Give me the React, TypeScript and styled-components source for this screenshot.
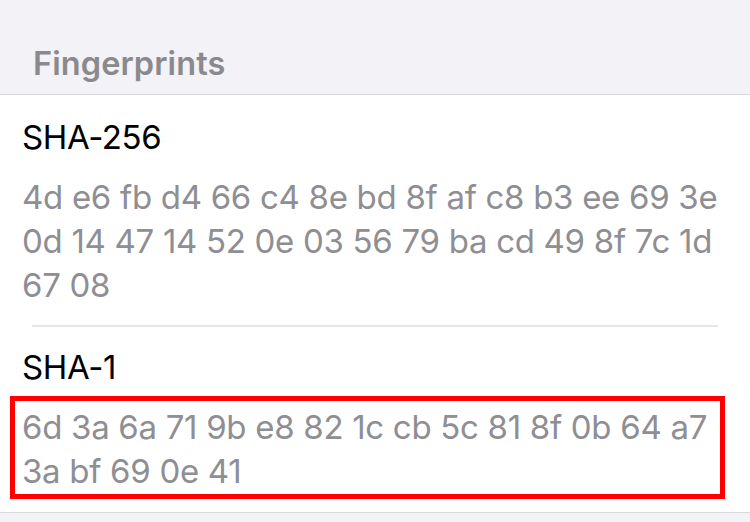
import React from "react";
import styled, { createGlobalStyle, css } from "styled-components";

const Global = createGlobalStyle`
  html, body {
    margin: 0;
    padding: 0;
    background: #f2f2f7;
  }
  body {
    font-family: Inter, "Noto Sans", sans-serif;
    -webkit-font-smoothing: antialiased;
  }
`;

const Page = styled.div`
  width: 750px;
  min-height: 522px;
  background: #f2f2f7;
`;

const SectionHeader = styled.div`
  height: 94px;
  box-sizing: border-box;
  display: flex;
  align-items: flex-end;
  padding: 0 0 11px 33px;
  font-size: 32.5px;
  font-weight: 600;
  color: #8a8a8e;
  letter-spacing: 0.1px;
`;

const Group = styled.div`
  background: #ffffff;
  border-top: 1px solid #d8d8dc;
  border-bottom: 1px solid #d8d8dc;
`;

const Cell = styled.div`
  padding: 0 28px 0 22px;
  display: flex;
  flex-direction: column;
`;

const Title = styled.div<{ $top: number }>`
  padding-top: ${(p) => p.$top}px;
  font-size: 33px;
  line-height: 40px;
  color: #000000;
  letter-spacing: -0.4px;
`;

const Detail = styled.div<{ $highlight?: boolean }>`
  position: relative;
  margin-top: 18px;
  font-size: 33px;
  line-height: 44px;
  color: #8e8e93;
  letter-spacing: -0.3px;
  ${(p) =>
    p.$highlight &&
    css`
      &::after {
        content: "";
        position: absolute;
        left: -12px;
        right: -3px;
        top: -9px;
        bottom: -6px;
        border: 5px solid #ff0000;
        pointer-events: none;
      }
    `}
`;

const Separator = styled.div`
  height: 2px;
  background: #e5e5ea;
  margin: 18px 4px 0 10px;
`;

const CellEnd = styled.div`
  height: 19px;
`;

export default function App() {
  return (
    <Page>
      <Global />
      <SectionHeader>Fingerprints</SectionHeader>
      <Group>
        <Cell>
          <Title $top={22}>SHA-256</Title>
          <Detail>
            4d e6 fb d4 66 c4 8e bd 8f af c8 b3 ee 69 3e 0d 14 47 14 52 0e 03 56 79 ba cd 49 8f 7c 1d 67 08
          </Detail>
          <Separator />
          <Title $top={20}>SHA-1</Title>
          <Detail $highlight>
            6d 3a 6a 71 9b e8 82 1c cb 5c 81 8f 0b 64 a7 3a bf 69 0e 41
          </Detail>
          <CellEnd />
        </Cell>
      </Group>
    </Page>
  );
}
